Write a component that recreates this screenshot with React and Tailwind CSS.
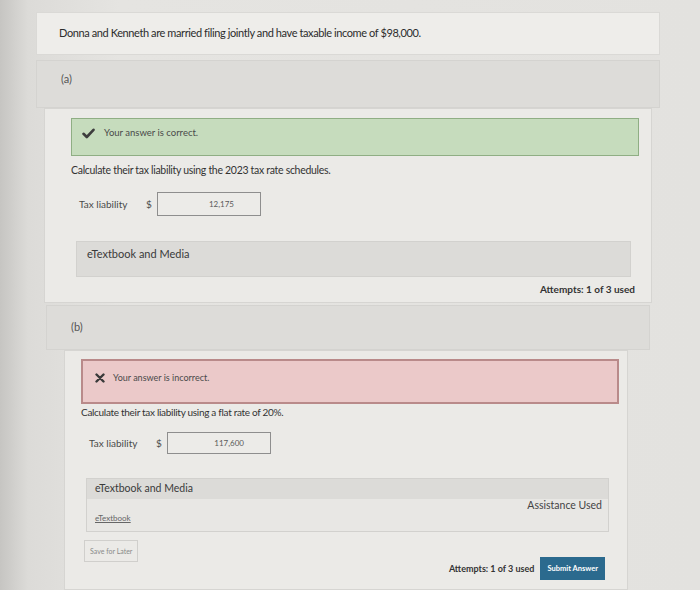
import React from 'react';

const font = { fontFamily: 'Lato, "Open Sans", sans-serif' };

const Check = () => (
    <svg width="13" height="11" viewBox="0 0 13 11" className="shrink-0">
        <path d="M1.5 5.8 L4.8 9 L11.5 1.8" fill="none" stroke="#3d3d3d" strokeWidth="2.6" strokeLinecap="round" strokeLinejoin="round" />
    </svg>
);

const Cross = () => (
    <svg width="10" height="10" viewBox="0 0 10 10" className="shrink-0">
        <path d="M1.5 1.5 L8.5 8.5 M8.5 1.5 L1.5 8.5" fill="none" stroke="#3a3a3a" strokeWidth="2.4" strokeLinecap="round" />
    </svg>
);

const TaxRow = ({ value, className, box = 'h-[24px]' }) => (
    <div className={`flex items-center text-[10px] text-[#4a4a4a] ${className}`}>
        <span className="w-[67px]">Tax liability</span>
        <span className="w-[11px]">$</span>
        <div className={`w-[104px] ${box} border border-[#8e8e8e] bg-[#ecebe8] flex items-center justify-end pr-[26px] text-[8px] text-[#5a5a5a]`}>
            {value}
        </div>
    </div>
);

export default function App() {
    return (
        <div style={font} className="w-[700px] h-[590px] overflow-hidden bg-[linear-gradient(90deg,#c6c5c2_0px,#dcdbd8_28px,#e5e4e1_120px,#e3e2df_100%)] pl-[36px] pr-[40px] pt-[12px]">
            {/* question stem */}
            <div className="h-[43px] border border-[#dad9d6] bg-[#eeedea] flex items-center pl-[22px] text-[11px] tracking-[-0.4px] text-[#2c2c2c]">
                Donna and Kenneth are married filing jointly and have taxable income of $98,000.
            </div>

            {/* part (a) */}
            <div className="mt-[5px] h-[48px] bg-[#dddcd9] border border-[#d4d3d0] flex items-center pl-[24px] pb-[10px] text-[11px] text-[#555]">
                (a)
            </div>
            <div className="mx-[8px] bg-[#ebeae7] border border-[#d6d5d2] pl-[26px] pr-[12px] pt-[9px] pb-[5px]">
                <div className="h-[38px] bg-[#c6dcbd] border border-[#8fae84] flex items-center gap-[9px] pl-[10px] pb-[8px] text-[9.5px] text-[#4a4a4a]">
                    <Check />
                    <span>Your answer is correct.</span>
                </div>
                <div className="mt-[7px] text-[10.5px] leading-[15px] tracking-[-0.3px] text-[#333]">
                    Calculate their tax liability using the 2023 tax rate schedules.
                </div>
                <TaxRow value="12,175" className="mt-[14px] ml-[8px]" />
                <div className="mt-[25px] ml-[5px] mr-[8px] h-[36px] bg-[#dcdbd8] border border-[#d2d1ce] pl-[10px] pt-[4px] text-[11px] text-[#3a3a3a]">
                    eTextbook and Media
                </div>
                <div className="mt-[5px] leading-[15px] text-right text-[10px] font-bold text-[#333] mr-[4px]">
                    Attempts: 1 of 3 used
                </div>
            </div>

            {/* part (b) */}
            <div className="mx-[10px] mt-[2px] h-[45px] bg-[#dddcd9] border border-[#d4d3d0] flex items-center pl-[24px] text-[11px] text-[#555]">
                (b)
            </div>
            <div className="ml-[28px] mr-[32px] bg-[#ebeae7] border border-[#d6d5d2] pl-[16px] pr-[8px] pt-[8px] h-[240px]">
                <div className="h-[45px] bg-[#ebc9c9] border-2 border-[#b98a8a] flex items-center gap-[8px] pl-[12px] pb-[8px] text-[9px] text-[#4a4a4a]">
                    <Cross />
                    <span>Your answer is incorrect.</span>
                </div>
                <div className="mt-[1px] text-[10px] leading-[14px] tracking-[-0.3px] text-[#333]">
                    Calculate their tax liability using a flat rate of 20%.
                </div>
                <TaxRow value="117,600" className="mt-[13px] ml-[8px]" box="h-[22px]" />
                <div className="mt-[24px] ml-[5px] mr-[10px] h-[54px] border border-[#d2d1ce] bg-[#e8e7e4]">
                    <div className="h-[20px] bg-[#dcdbd8] flex items-center pl-[8px] text-[10.5px] text-[#3a3a3a]">
                        eTextbook and Media
                    </div>
                    <div className="flex flex-col pl-[8px] pr-[6px]">
                        <div className="text-right text-[10.5px] leading-[14px] text-[#444] -mt-[1px]">Assistance Used</div>
                        <span className="text-[8px] leading-[12px] text-[#666] underline self-start">eTextbook</span>
                    </div>
                </div>
                <div className="mt-[8px] flex items-start justify-between ml-[3px] mr-[14px]">
                    <div className="h-[22px] px-[5px] border border-[#d0cfcc] bg-[#ebeae7] flex items-center text-[7px] text-[#8a8a8a]">
                        Save for Later
                    </div>
                    <div className="flex items-center gap-[6px] mt-[17px]">
                        <span className="text-[9px] font-bold text-[#333]">Attempts: 1 of 3 used</span>
                        <div className="h-[23px] px-[7px] bg-[#2b6a8e] flex items-center text-[7.5px] font-bold text-white">
                            Submit Answer
                        </div>
                    </div>
                </div>
            </div>
        </div>
    );
}
